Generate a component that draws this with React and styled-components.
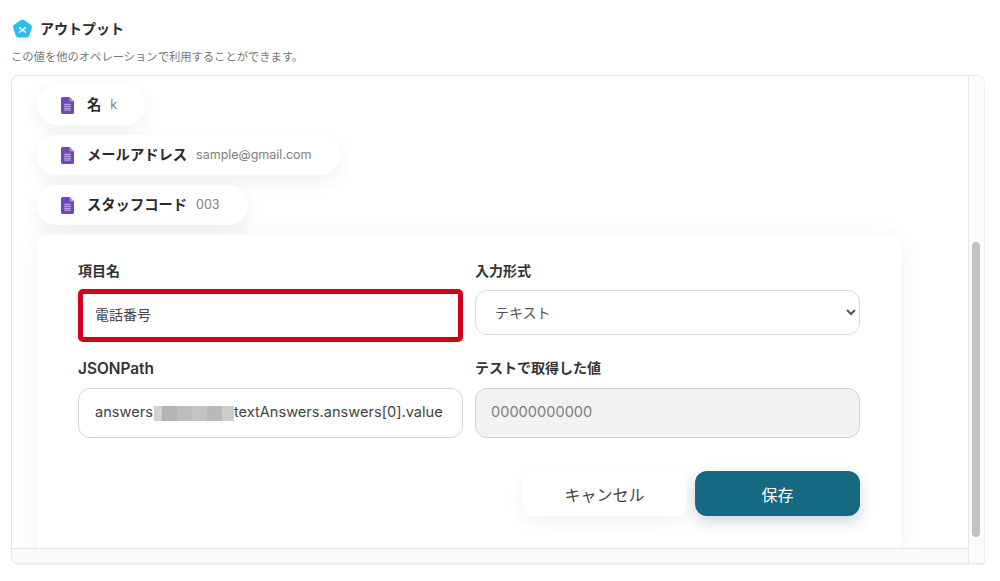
import React from 'react'
import styled, { createGlobalStyle } from 'styled-components'

const GlobalStyle = createGlobalStyle`
  html, body {
    margin: 0;
    padding: 0;
    background: #fff;
  }
  body {
    font-family: "Inter", "Noto Sans CJK JP", sans-serif;
    color: #2b2b2b;
  }
`

const Page = styled.div`
  width: 1000px;
  height: 581px;
  padding: 19px 15px 0 11px;
  box-sizing: border-box;
  overflow: hidden;
`

const Header = styled.div`
  display: flex;
  align-items: center;
  gap: 7px;
  height: 20px;
  padding-left: 1px;
`

const Title = styled.h2`
  margin: 0;
  padding-bottom: 2px;
  font-size: 14px;
  font-weight: 700;
  color: #2a2a2a;
`

const Sub = styled.p`
  margin: 9px 0 0;
  height: 27px;
  line-height: 19px;
  font-size: 11.3px;
  color: #777;
`

const Frame = styled.div`
  height: 489px;
  border: 1px solid #e6e6e6;
  border-right-color: #f0f0f0;
  border-radius: 8px 8px 0 8px;
  box-sizing: border-box;
  display: grid;
  grid-template-columns: 1fr 16px;
  grid-template-rows: 1fr 15px;
  overflow: hidden;
  box-shadow: 0 1px 1px rgba(0, 0, 0, 0.06);
`

const Scroller = styled.div`
  overflow: hidden;
  padding: 9px 0 0 25px;
  display: flex;
  flex-direction: column;
  align-items: flex-start;
  gap: 10px;
`

const Chip = styled.div`
  display: flex;
  flex: none;
  align-items: center;
  height: 40px;
  width: ${(p) => p.$w}px;
  box-sizing: border-box;
  padding-left: 24px;
  background: #fff;
  border-radius: 20px;
  box-shadow: 0 6px 18px rgba(40, 50, 60, 0.08);
`

const ChipName = styled.span`
  margin-left: 13px;
  padding-bottom: 3px;
  font-size: 14.3px;
  font-weight: 700;
  color: #2a2a2a;
`

const ChipValue = styled.span`
  margin-left: 9px;
  padding-bottom: 2px;
  font-size: 12.5px;
  color: #808080;
`

const Card = styled.div`
  width: 864px;
  flex: none;
  height: 330px;
  box-sizing: border-box;
  padding: 26px 41px 0;
  background: #fff;
  border-radius: 10px;
  box-shadow: 0 2px 22px rgba(40, 50, 60, 0.07);
`

const FormGrid = styled.div`
  display: grid;
  grid-template-columns: 385px 385px;
  column-gap: 12px;
`

const Field = styled.div`
  display: flex;
  flex-direction: column;
  height: ${(p) => p.$h}px;
`

const Label = styled.label`
  height: 20px;
  line-height: ${(p) => (p.$lift ? 18 : 20)}px;
  font-size: ${(p) => (p.$latin ? 15.4 : 14)}px;
  font-weight: ${(p) => (p.$latin ? 600 : 700)};
  color: #333;
  margin-bottom: ${(p) => p.$gap}px;
`

const NameBox = styled.div`
  box-sizing: border-box;
  height: 53px;
  border: 5px solid #d0021b;
  border-radius: 5px;
  padding: 0 0 3px 12px;
  display: flex;
  align-items: center;
  font-size: 14px;
  color: #444;
`

const Select = styled.select`
  box-sizing: border-box;
  height: 45px;
  margin-top: 1px;
  width: 100%;
  border: 1px solid #d8dbe0;
  border-radius: 12px;
  padding-left: 15px;
  background: #fff;
  font-family: inherit;
  font-size: 14px;
  color: #555;
`

const TextBox = styled.div`
  box-sizing: border-box;
  height: 50px;
  border: 1px solid ${(p) => (p.$disabled ? '#d0d0d0' : '#d4d4d4')};
  border-radius: 12px;
  padding: 0 0 2px ${(p) => (p.$disabled ? 15 : 16)}px;
  display: flex;
  align-items: center;
  white-space: nowrap;
  font-size: 14.6px;
  background: ${(p) => (p.$disabled ? '#f2f2f2' : '#fff')};
  color: ${(p) => (p.$disabled ? '#808080' : '#444')};
`

const Mosaic = styled.span`
  display: inline-flex;
  width: 80px;
  height: 15px;
  margin: 2px 0 0 1px;
`

const MosaicCell = styled.span`
  height: 100%;
  width: ${(p) => p.$w}px;
  background: ${(p) => p.$c};
`

const Actions = styled.div`
  display: flex;
  justify-content: flex-end;
  gap: 8px;
  margin-top: 32px;
  width: 782px;
`

const Button = styled.button`
  width: 165px;
  height: 45px;
  border: 0;
  border-radius: 12px;
  font-family: inherit;
  font-size: 16px;
  background: ${(p) => (p.$primary ? '#156982' : '#fff')};
  color: ${(p) => (p.$primary ? '#fff' : '#444')};
  box-shadow: 0 6px 16px rgba(30, 50, 60, ${(p) => (p.$primary ? 0.2 : 0.07)});
`

const ScrollTrack = styled.div`
  grid-row: 1 / 3;
  grid-column: 2;
  background: #fbfbfb;
  border-left: 1px solid #e6e6e6;
  padding: 166px 4px 0 3px;
  box-sizing: border-box;
`

const ScrollThumb = styled.div`
  height: 295px;
  width: 8px;
  border-radius: 4px;
  background: #c2c2c2;
`

const HorizontalTrack = styled.div`
  grid-row: 2;
  grid-column: 1;
  background: #fafafa;
  border-top: 1px solid #e6e6e6;
`

const LogoIcon = () => (
  <svg width="21" height="20" viewBox="0 0 21 20">
    <path
      d="M8.9 1 a2.6 2.6 0 0 1 3.2 0 l6.7 4.8 a2.6 2.6 0 0 1 1 2.9 l-2.5 8 a2.6 2.6 0 0 1 -2.5 1.8 h-8.6 a2.6 2.6 0 0 1 -2.5 -1.8 l-2.5 -8 a2.6 2.6 0 0 1 1 -2.9 z"
      fill="#2bbdee"
    />
    <path d="M7.5 8.6 l6 4.6 M13.5 8.6 l-6 4.6" stroke="#fff" strokeWidth="1.4" strokeLinecap="round" />
  </svg>
)

const FormsIcon = () => (
  <svg width="13" height="17" viewBox="0 0 13 17">
    <path d="M1.5 0 H8.5 L13 4.5 V15.5 a1.5 1.5 0 0 1 -1.5 1.5 H1.5 A1.5 1.5 0 0 1 0 15.5 V1.5 A1.5 1.5 0 0 1 1.5 0 z" fill="#7248b9" />
    <path d="M8.5 0 L13 4.5 H9.7 A1.2 1.2 0 0 1 8.5 3.3 z" fill="#a98bd8" />
    <path d="M3.2 7.3 H9.8 M3.2 9.3 H9.8 M3.2 11.3 H9.8 M3.2 13.1 H9.8" stroke="#c9b8ea" strokeWidth="1" />
  </svg>
)

const chips = [
  { name: '名', value: 'k', width: 108 },
  { name: 'メールアドレス', value: 'sample@gmail.com', width: 303 },
  { name: 'スタッフコード', value: '003', width: 211 },
]

const mosaic = [
  [8, '#d2d2d2'],
  [15, '#b4b4b4'],
  [15, '#bdbdbd'],
  [15, '#c4c4c4'],
  [15, '#bababa'],
  [12, '#cdcdcd'],
]

export default function App() {
  return (
    <Page>
      <GlobalStyle />
      <Header>
        <LogoIcon />
        <Title>アウトプット</Title>
      </Header>
      <Sub>この値を他のオペレーションで利用することができます。</Sub>
      <Frame>
        <Scroller>
          {chips.map((c) => (
            <Chip key={c.name} $w={c.width}>
              <FormsIcon />
              <ChipName>{c.name}</ChipName>
              <ChipValue>{c.value}</ChipValue>
            </Chip>
          ))}
          <Card>
            <FormGrid>
              <Field $h={98}>
                <Label $gap={8}>項目名</Label>
                <NameBox>電話番号</NameBox>
              </Field>
              <Field $h={98}>
                <Label $gap={8}>入力形式</Label>
                <Select defaultValue="text">
                  <option value="text">テキスト</option>
                </Select>
              </Field>
              <Field $h={80}>
                <Label $gap={9} $latin>JSONPath</Label>
                <TextBox>
                  answers
                  <Mosaic>
                    {mosaic.map(([w, c], i) => (
                      <MosaicCell key={i} $w={w} $c={c} />
                    ))}
                  </Mosaic>
                  textAnswers.answers[0].value
                </TextBox>
              </Field>
              <Field $h={80}>
                <Label $gap={9} $lift>テストで取得した値</Label>
                <TextBox $disabled>00000000000</TextBox>
              </Field>
            </FormGrid>
            <Actions>
              <Button>キャンセル</Button>
              <Button $primary>保存</Button>
            </Actions>
          </Card>
        </Scroller>
        <ScrollTrack>
          <ScrollThumb />
        </ScrollTrack>
        <HorizontalTrack />
      </Frame>
    </Page>
  )
}
